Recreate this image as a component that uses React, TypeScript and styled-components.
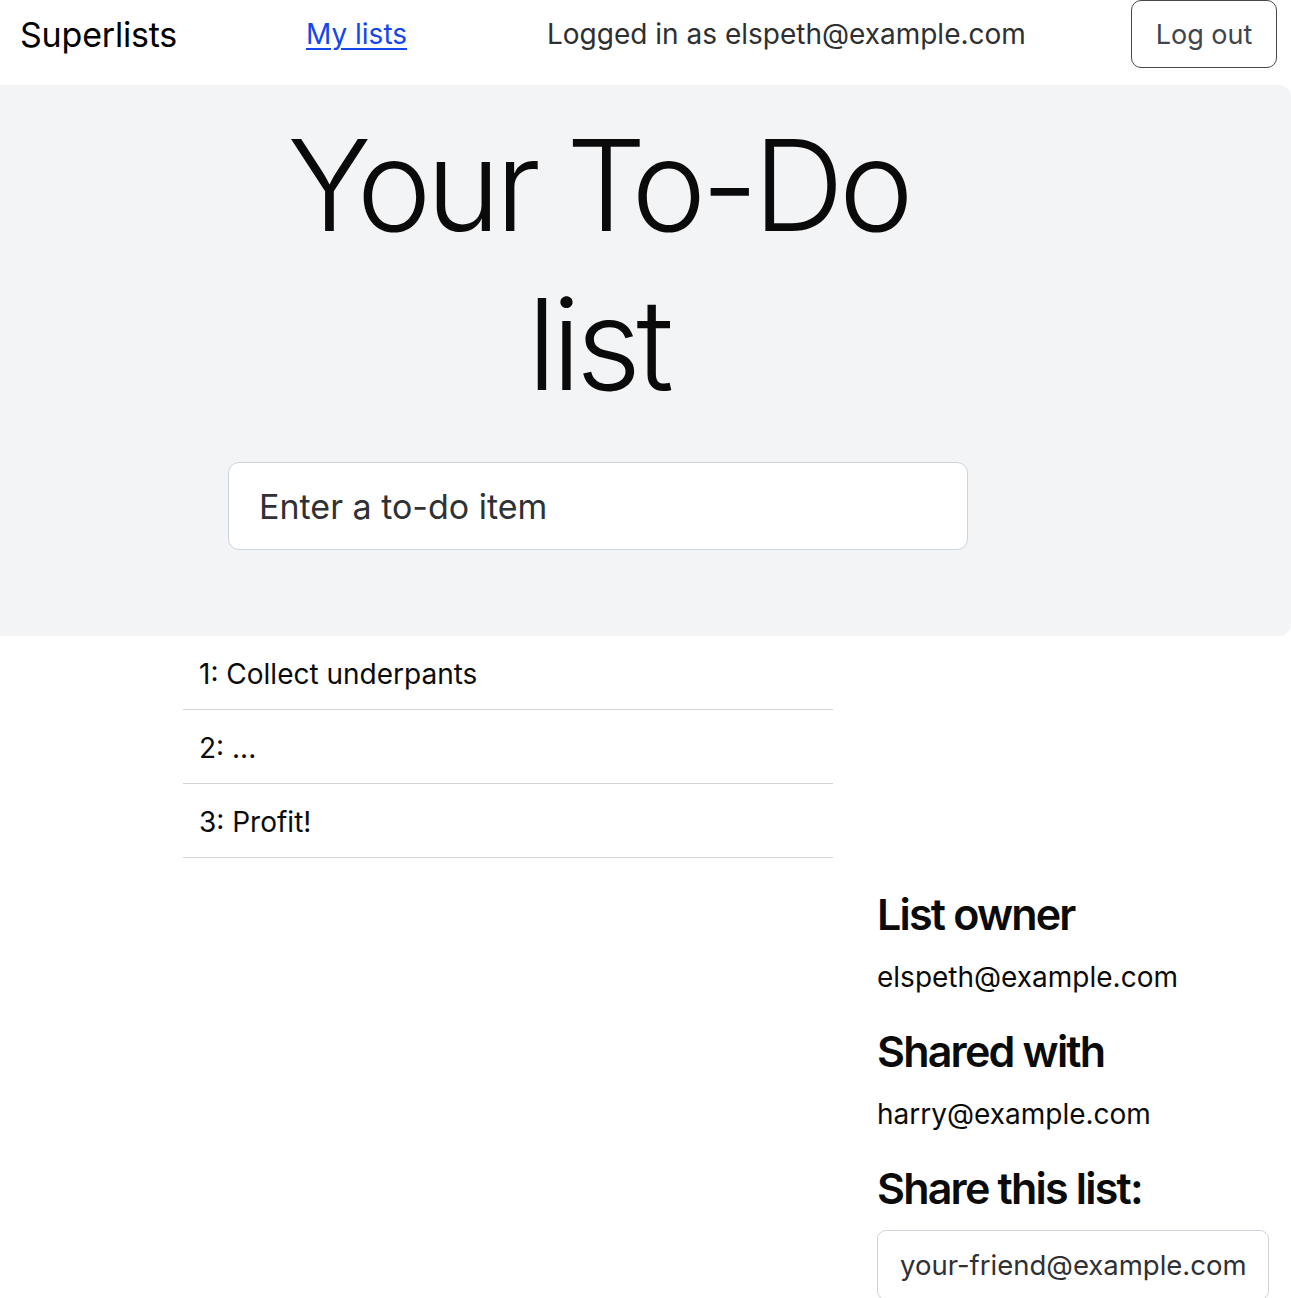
import React from "react";
import styled, { createGlobalStyle } from "styled-components";

const GlobalStyle = createGlobalStyle`
  html, body { margin: 0; padding: 0; background: #ffffff; }
  body {
    font-family: Inter, "Noto Sans", "Liberation Sans", sans-serif;
    color: #0b0b0c;
    font-size: 28px;
    -webkit-font-smoothing: antialiased;
  }
  * { box-sizing: border-box; }
`;

const Page = styled.div`
  width: 1291px;
  min-height: 1298px;
  overflow: hidden;
`;

const Nav = styled.nav`
  display: grid;
  grid-template-columns: 286px 241px 1fr auto;
  align-items: center;
  height: 68px;
  padding: 0 14px 0 20px;
  margin-bottom: 17px;
`;

const Brand = styled.a`
  font-size: 34px;
  color: #000;
  text-decoration: none;
  letter-spacing: -0.2px;
`;

const NavLink = styled.a`
  font-size: 28px;
  color: #1246ee;
  text-decoration: underline;
  text-underline-offset: 4px;
  text-decoration-thickness: 2px;
`;

const NavText = styled.span`
  font-size: 28px;
  color: #2e2f31;
`;

const OutlineButton = styled.button`
  font-family: inherit;
  font-size: 27px;
  color: #40454b;
  background: transparent;
  border: 1.5px solid #45494e;
  border-radius: 10px;
  height: 68px;
  width: 146px;
  padding: 0;
  cursor: pointer;
`;

const Jumbotron = styled.section`
  background: #f3f4f6;
  border-radius: 0 12px 12px 0;
  padding: 21px 0 86px 228px;
`;

const Hero = styled.div`
  width: 740px;
  display: flex;
  flex-direction: column;
  align-items: stretch;
`;

const Title = styled.h1`
  margin: 0 0 38px;
  text-align: center;
  font-weight: 300;
  font-size: 126px;
  line-height: 159px;
  letter-spacing: -5px;
  color: #0a0a0b;
`;

const BigInput = styled.input`
  width: 100%;
  height: 88px;
  padding: 0 30px;
  font-family: inherit;
  font-size: 34px;
  color: #2f3134;
  background: #fff;
  border: 1px solid #cfd4da;
  border-radius: 11px;
  outline: none;
  &::placeholder { color: #2f3134; opacity: 1; }
`;

const ItemsTable = styled.div`
  width: 650px;
  margin-left: 183px;
  display: flex;
  flex-direction: column;
`;

const ItemRow = styled.div`
  height: 74px;
  display: flex;
  align-items: center;
  padding-left: 16px;
  padding-top: 2px;
  border-bottom: 1px solid #d3d5d8;
  font-size: 28px;
  color: #0b0b0c;
`;

const Sidebar = styled.aside`
  width: 392px;
  margin-left: 877px;
  margin-top: 29px;
  display: flex;
  flex-direction: column;
`;

const SideHeading = styled.h3`
  margin: 0 0 16px;
  font-size: 43px;
  line-height: 54px;
  font-weight: 600;
  letter-spacing: -1.8px;
  color: #0b0b0c;
`;

const SideText = styled.p`
  margin: 0 0 27px;
  font-size: 28px;
  line-height: 40px;
  color: #0b0b0c;
`;

const SmallInput = styled.input`
  width: 392px;
  height: 70px;
  margin-top: -1px;
  padding: 0 22px;
  font-family: inherit;
  font-size: 27.5px;
  color: #2f3134;
  background: #fff;
  border: 1px solid #cfd4da;
  border-radius: 9px;
  outline: none;
  &::placeholder { color: #2f3134; opacity: 1; }
`;

const items = ["1: Collect underpants", "2: ...", "3: Profit!"];

export default function App() {
  return (
    <Page>
      <GlobalStyle />
      <Nav>
        <Brand href="#">Superlists</Brand>
        <NavLink href="#">My lists</NavLink>
        <NavText>Logged in as elspeth@example.com</NavText>
        <OutlineButton type="button">Log out</OutlineButton>
      </Nav>
      <Jumbotron>
        <Hero>
          <Title>Your To-Do list</Title>
          <BigInput placeholder="Enter a to-do item" />
        </Hero>
      </Jumbotron>
      <ItemsTable>
        {items.map((t) => (
          <ItemRow key={t}>{t}</ItemRow>
        ))}
      </ItemsTable>
      <Sidebar>
        <SideHeading>List owner</SideHeading>
        <SideText>elspeth@example.com</SideText>
        <SideHeading>Shared with</SideHeading>
        <SideText>harry@example.com</SideText>
        <SideHeading>Share this list:</SideHeading>
        <SmallInput placeholder="your-friend@example.com" />
      </Sidebar>
    </Page>
  );
}
